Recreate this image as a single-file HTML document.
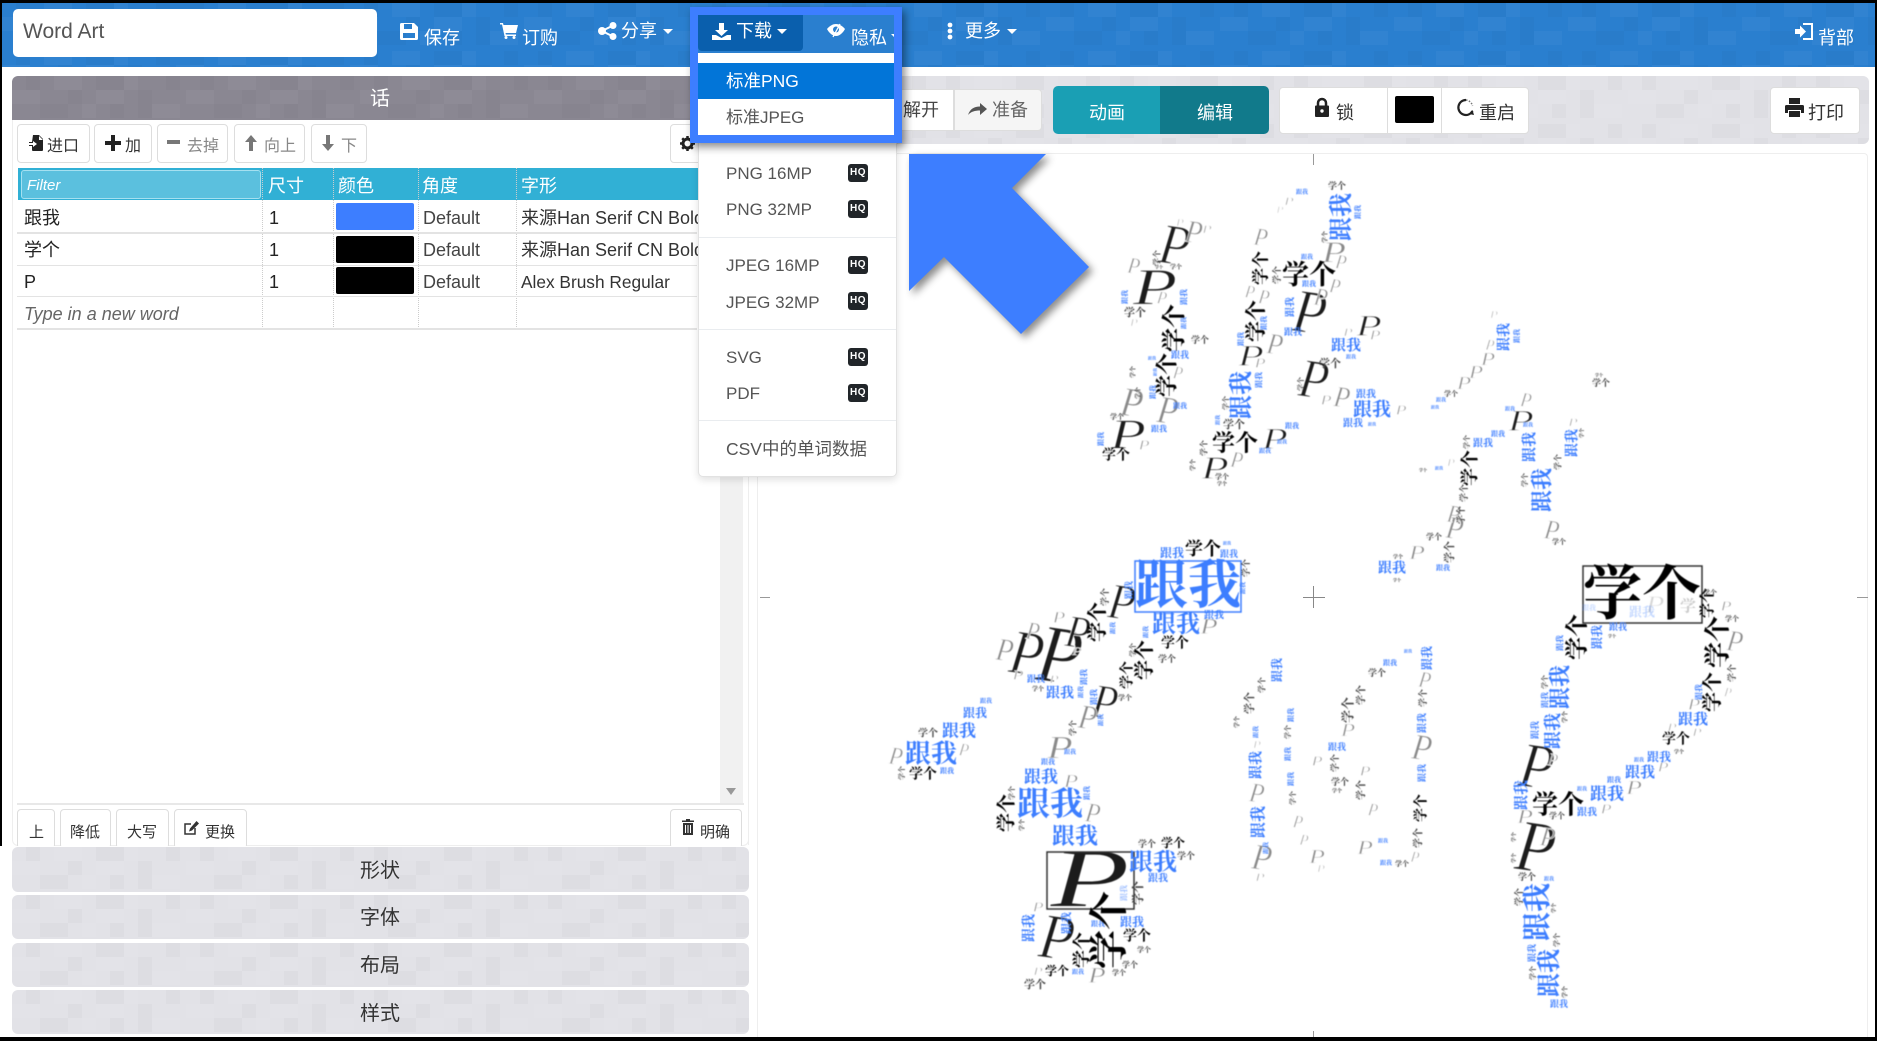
<!DOCTYPE html>
<html lang="zh-CN"><head><meta charset="utf-8"><title>Word Art</title>
<style>
html,body{margin:0;padding:0;background:#000;}
#page{position:relative;width:1877px;height:1041px;overflow:hidden;background:#000;font-family:"Liberation Sans","Noto Sans CJK SC",sans-serif;color:#333;}
#bg{position:absolute;left:2px;top:3px;width:1873px;height:1034px;background:#fff;}
.a{position:absolute;white-space:nowrap;}
.t{position:absolute;white-space:nowrap;font-size:18px;line-height:24px;height:24px;}
.w{color:#fff;}
.btn{position:absolute;background:#fff;border:1px solid #ddd;border-radius:4px;box-sizing:border-box;}
.tex{position:absolute;overflow:hidden;}
.tex svg{position:absolute;left:0;top:0;width:100%;height:100%;}
.tex rect{opacity:.55}
.acc{background:#e2e2e7;border-radius:6px;left:12px;width:737px;}
.sw{position:absolute;left:336px;width:78px;height:27px;border-radius:2px;}
.vd{position:absolute;width:0;border-left:1px dotted #ccc;}
.hl{position:absolute;left:17px;width:680px;height:1px;background:#e3e3e3;}
.hq{position:absolute;left:848px;width:20px;height:18px;border-radius:3px;background:#212529;color:#fff;font:bold 10px/18px "Liberation Sans",sans-serif;text-align:center;letter-spacing:.5px;}
.dd{position:absolute;left:726px;font-size:17px;line-height:24px;color:#555;white-space:nowrap;}
.caret{position:absolute;width:0;height:0;border-left:5px solid transparent;border-right:5px solid transparent;border-top:5px solid #fff;}
svg.i{position:absolute;overflow:visible;}
#cloud text{text-anchor:middle;dominant-baseline:central;}
#cloud{position:absolute;left:0;top:0;filter:blur(.5px);font-family:"Liberation Serif","Noto Serif CJK SC",serif;font-weight:700;}
.b{fill:#3d7eff}.k{fill:#000}.g{fill:#444}
.pd,.pl{font-family:"Liberation Serif",serif;font-style:italic;font-weight:400;}
.pd{fill:#1c1c1c;stroke:#fff;stroke-width:.05em}.pl{fill:#8a8a8a;stroke:#fff;stroke-width:.035em}
</style></head><body>
<div id="page">
<div id="bg"></div>
<svg width="0" height="0" style="position:absolute"><defs>
<pattern id="tx" width="174" height="48" patternUnits="userSpaceOnUse">
<g fill="#000" fill-opacity=".045"><rect x="14" y="0" width="14" height="14"/><rect x="56" y="14" width="14" height="14"/><rect x="84" y="0" width="28" height="14"/><rect x="126" y="14" width="14" height="28"/><rect x="28" y="28" width="28" height="14"/><rect x="154" y="0" width="14" height="14"/><rect x="98" y="28" width="14" height="14"/></g>
<g fill="#fff" fill-opacity=".06"><rect x="0" y="14" width="28" height="14"/><rect x="70" y="28" width="14" height="14"/><rect x="42" y="0" width="28" height="14"/><rect x="112" y="0" width="14" height="14"/><rect x="140" y="28" width="28" height="14"/><rect x="84" y="14" width="28" height="14"/></g>
</pattern></defs></svg>

<!-- navbar -->
<div class="tex" style="left:2px;top:3px;width:1873px;height:64px;background:#2a7fcf"><svg><rect width="100%" height="100%" fill="url(#tx)"/></svg></div>
<div class="a" style="left:13px;top:9px;width:364px;height:48px;background:#fff;border-radius:5px;font-size:21px;line-height:46px;color:#555;text-indent:10px">Word Art</div>

<svg class="i" style="left:400px;top:23px" width="18" height="17" viewBox="0 0 18 17"><path fill="#fff" fill-rule="evenodd" d="M1.500 0H14l4 4v11.500a1.500 1.500 0 0 1-1.500 1.500h-15A1.500 1.500 0 0 1 0 15.500v-14A1.500 1.500 0 0 1 1.500 0zM4 1v5h8V1zM3 10v5h12v-5z"/></svg>
<div class="t w" style="left:424px;top:26px">保存</div>
<svg class="i" style="left:500px;top:23px" width="18" height="16" viewBox="0 0 18 16"><path fill="#fff" d="M0 0h3l.5 2H18l-2 8H5.500l.4 1.500H16V13H4.500L2 1.500H0z"/><circle cx="6" cy="14.500" r="1.500" fill="#fff"/><circle cx="14" cy="14.500" r="1.500" fill="#fff"/></svg>
<div class="t w" style="left:522px;top:26px">订购</div>
<svg class="i" style="left:598px;top:22px" width="19" height="18" viewBox="0 0 19 18"><g fill="#fff"><circle cx="15" cy="3.500" r="3.500"/><circle cx="15" cy="14.500" r="3.500"/><circle cx="4" cy="9" r="4"/></g><path stroke="#fff" stroke-width="2" d="M15 3.500L4 9l11 5.500" fill="none"/></svg>
<div class="t w" style="left:621px;top:19px">分享</div>
<div class="caret" style="left:663px;top:29px"></div>
<svg class="i" style="left:947px;top:22px" width="6" height="18" viewBox="0 0 6 18"><g fill="#fff"><circle cx="3" cy="3" r="2.400"/><circle cx="3" cy="9" r="2.400"/><circle cx="3" cy="15" r="2.400"/></g></svg>
<div class="t w" style="left:965px;top:19px">更多</div>
<div class="caret" style="left:1007px;top:29px"></div>
<svg class="i" style="left:1795px;top:23px" width="18" height="17" viewBox="0 0 18 17"><path fill="#fff" d="M8 0h10v17H8v-2h8V2H8zM0 6h5V2.500L11 8.500l-6 6V11H0z"/></svg>
<div class="t w" style="left:1818px;top:26px">背部</div>

<!-- left panel -->
<div class="a" style="left:12px;top:120px;width:735px;height:725px;border:1px solid #eee;border-top:0;border-radius:0 0 6px 6px"></div>
<div class="tex" style="left:12px;top:76px;width:737px;height:44px;background:#8a8792;border-radius:6px 6px 0 0"><svg><rect width="100%" height="100%" fill="url(#tx)"/></svg></div>
<div class="t w" style="left:370px;top:87px;font-size:20px">话</div>

<div class="btn" style="left:17px;top:124px;width:73px;height:39px"></div>
<svg class="i" style="left:29px;top:135px" width="15" height="16" viewBox="0 0 15 16"><path fill="#222" d="M4 0h6l4 4v11a1 1 0 0 1-1 1H4a1 1 0 0 1-1-1v-4H0V7h3zm6 1v4h4z"/><path fill="#fff" d="M0 8h4V6l4 3-4 3v-2H0z"/></svg>
<div class="t" style="left:47px;top:135px;font-size:16px">进口</div>
<div class="btn" style="left:94px;top:124px;width:58px;height:39px"></div>
<svg class="i" style="left:105px;top:135px" width="16" height="16"><path fill="#222" d="M6 0h4v6h6v4h-6v6H6v-6H0V6h6z"/></svg>
<div class="t" style="left:125px;top:135px;font-size:16px">加</div>
<div class="btn" style="left:157px;top:124px;width:71px;height:39px"></div>
<svg class="i" style="left:167px;top:140px" width="13" height="4"><rect width="13" height="4" fill="#777"/></svg>
<div class="t" style="left:187px;top:135px;font-size:16px;color:#888">去掉</div>
<div class="btn" style="left:234px;top:124px;width:71px;height:39px"></div>
<svg class="i" style="left:245px;top:135px" width="12" height="16"><path fill="#777" d="M6 0l6 7H8v9H4V7H0z"/></svg>
<div class="t" style="left:264px;top:135px;font-size:16px;color:#888">向上</div>
<div class="btn" style="left:311px;top:124px;width:56px;height:39px"></div>
<svg class="i" style="left:322px;top:135px" width="12" height="16"><path fill="#777" d="M6 16l6-7H8V0H4v9H0z"/></svg>
<div class="t" style="left:341px;top:135px;font-size:16px;color:#888">下</div>
<div class="btn" style="left:670px;top:124px;width:60px;height:39px"></div>
<svg class="i" style="left:680px;top:136px" width="15" height="15" viewBox="0 0 15 15"><circle cx="7.500" cy="7.500" r="4.500" fill="none" stroke="#222" stroke-width="3"/><path stroke="#222" stroke-width="2.500" d="M7.500 0v3M7.500 12v3M0 7.500h3M12 7.500h3M2.200 2.200l2 2M10.800 10.800l2 2M2.200 12.800l2-2M10.800 4.200l2-2"/></svg>

<!-- table -->
<div class="a" style="left:720px;top:168px;width:23px;height:636px;background:#f1f1f1"></div>
<svg class="i" style="left:726px;top:788px" width="10" height="7"><path fill="#999" d="M0 0h10L5 7z"/></svg>
<div class="a" style="left:17px;top:803px;width:727px;height:2px;background:#e8e8e8"></div>
<div class="a" style="left:18px;top:168px;width:702px;height:32px;background:#31b0d5"></div>
<div class="a" style="left:21px;top:170px;width:238px;height:27px;background:#5bc0de;border:1px solid #a5e0f0;border-radius:3px;color:#fff;font-style:italic;font-size:15px;line-height:29px;text-indent:5px">Filter</div>
<div class="t w" style="left:268px;top:174px">尺寸</div>
<div class="t w" style="left:338px;top:174px">颜色</div>
<div class="t w" style="left:422px;top:174px">角度</div>
<div class="t w" style="left:521px;top:174px">字形</div>
<div class="vd" style="left:262px;top:168px;height:161px"></div>
<div class="vd" style="left:333px;top:168px;height:161px"></div>
<div class="vd" style="left:418px;top:168px;height:161px"></div>
<div class="vd" style="left:516px;top:168px;height:161px"></div>
<div class="hl" style="top:232px;height:2px"></div><div class="hl" style="top:265px"></div><div class="hl" style="top:296px"></div><div class="hl" style="top:328px;height:2px"></div>
<div class="t" style="left:24px;top:206px;color:#222">跟我</div><div class="t" style="left:269px;top:206px;color:#222">1</div><div class="sw" style="top:203px;background:#3d7eff"></div><div class="t" style="left:423px;top:206px;color:#444">Default</div><div class="t" style="left:521px;top:206px;color:#333">来源Han Serif CN Bold</div>
<div class="t" style="left:24px;top:238px;color:#222">学个</div><div class="t" style="left:269px;top:238px;color:#222">1</div><div class="sw" style="top:236px;background:#000"></div><div class="t" style="left:423px;top:238px;color:#444">Default</div><div class="t" style="left:521px;top:238px;color:#333">来源Han Serif CN Bold</div>
<div class="t" style="left:24px;top:270px;color:#222">P</div><div class="t" style="left:269px;top:270px;color:#222">1</div><div class="sw" style="top:267px;background:#000"></div><div class="t" style="left:423px;top:270px;color:#444">Default</div><div class="t" style="left:521px;top:270px;font-size:17.300px;color:#333">Alex Brush Regular</div>
<div class="t" style="left:24px;top:302px;font-style:italic;color:#666">Type in a new word</div>

<!-- bottom buttons -->
<div class="btn" style="left:17px;top:809px;width:38px;height:40px"></div><div class="t" style="left:29px;top:821px;font-size:15px">上</div>
<div class="btn" style="left:60px;top:809px;width:51px;height:40px"></div><div class="t" style="left:70px;top:821px;font-size:15px">降低</div>
<div class="btn" style="left:116px;top:809px;width:53px;height:40px"></div><div class="t" style="left:127px;top:821px;font-size:15px">大写</div>
<div class="btn" style="left:174px;top:809px;width:73px;height:40px"></div>
<svg class="i" style="left:184px;top:821px" width="15" height="14" viewBox="0 0 15 14"><path fill="none" stroke="#333" stroke-width="1.500" d="M11 7v6H1V3h6"/><path fill="#333" d="M12.500 0L15 2.500 8 9.500 5 10.500 6 7.500z"/></svg>
<div class="t" style="left:205px;top:821px;font-size:15px">更换</div>
<div class="btn" style="left:670px;top:809px;width:72px;height:40px"></div>
<svg class="i" style="left:682px;top:819px" width="12" height="16" viewBox="0 0 12 16"><path fill="#333" d="M4 0h4v1.500h4V3H0V1.500h4zM1 4h10v12H1zm2 2v8h1V6zm2.500 0v8h1V6zM8 6v8h1V6z"/></svg>
<div class="t" style="left:700px;top:821px;font-size:15px">明确</div>

<!-- accordions -->
<div class="a" style="left:0;top:846px;width:757px;height:191px;background:#fff"></div>
<div class="tex acc" style="top:847px;height:45px"><svg><rect width="100%" height="100%" fill="url(#tx)"/></svg></div><div class="t" style="left:360px;top:859px;font-size:20px">形状</div>
<div class="tex acc" style="top:895px;height:44px"><svg><rect width="100%" height="100%" fill="url(#tx)"/></svg></div><div class="t" style="left:360px;top:906px;font-size:20px">字体</div>
<div class="tex acc" style="top:943px;height:44px"><svg><rect width="100%" height="100%" fill="url(#tx)"/></svg></div><div class="t" style="left:360px;top:954px;font-size:20px">布局</div>
<div class="tex acc" style="top:990px;height:44px"><svg><rect width="100%" height="100%" fill="url(#tx)"/></svg></div><div class="t" style="left:360px;top:1002px;font-size:20px">样式</div>

<!-- right toolbar -->
<div class="a" style="left:748px;top:76px;width:1px;height:769px;background:#eee"></div>
<div class="tex" style="left:758px;top:76px;width:1111px;height:68px;background:#e2e2e7;border-radius:6px"><svg><rect width="100%" height="100%" fill="url(#tx)"/></svg></div>
<div class="a" style="left:880px;top:89px;width:74px;height:42px;background:#fff;border:1px solid #ddd;box-sizing:border-box"></div>
<div class="t" style="left:903px;top:98px;color:#444">解开</div>
<div class="a" style="left:954px;top:89px;width:88px;height:42px;background:#f5f5f5;border:1px solid #ddd;box-sizing:border-box;border-radius:0 4px 4px 0"></div>
<svg class="i" style="left:968px;top:103px" width="19" height="14" viewBox="0 0 19 14"><path fill="#555" d="M19 6l-7-6v3.500C6 3.500 2 6 0 12c3-3.500 7-4.500 12-4.500V12z"/></svg>
<div class="t" style="left:992px;top:98px;color:#666">准备</div>
<div class="a" style="left:1053px;top:86px;width:107px;height:48px;background:#1a9fb4;border-radius:5px 0 0 5px"></div>
<div class="a" style="left:1160px;top:86px;width:109px;height:48px;background:#117a8b;border-radius:0 5px 5px 0"></div>
<div class="t w" style="left:1089px;top:101px">动画</div>
<div class="t w" style="left:1197px;top:101px">编辑</div>
<div class="btn" style="left:1279px;top:87px;width:250px;height:47px"></div>
<div class="a" style="left:1387px;top:87px;width:1px;height:47px;background:#ddd"></div>
<div class="a" style="left:1441px;top:87px;width:1px;height:47px;background:#ddd"></div>
<svg class="i" style="left:1315px;top:98px" width="14" height="19" viewBox="0 0 14 19"><path fill="none" stroke="#222" stroke-width="2.500" d="M3 9V5a4 4 0 0 1 8 0v4"/><rect y="7.500" width="14" height="11.500" rx="1" fill="#222"/><circle cx="7" cy="13" r="1.700" fill="#fff"/></svg>
<div class="t" style="left:1336px;top:101px;color:#333">锁</div>
<div class="a" style="left:1395px;top:96px;width:39px;height:27px;background:#000;border-radius:2px"></div>
<svg class="i" style="left:1455px;top:98px" width="19" height="19" viewBox="0 0 19 19"><path fill="none" stroke="#222" stroke-width="2.200" d="M11 2a7.500 7.500 0 1 0 6.500 11"/><path fill="#222" d="M19 17l-5-1 3.500-4z"/><path fill="none" stroke="#777" stroke-width="1.500" stroke-dasharray="1.500 1.500" d="M11 2a7.500 7.500 0 0 1 6.500 6"/></svg>
<div class="t" style="left:1479px;top:101px;color:#333">重启</div>
<div class="btn" style="left:1770px;top:87px;width:90px;height:47px"></div>
<svg class="i" style="left:1785px;top:98px" width="19" height="19" viewBox="0 0 19 19"><path fill="#222" d="M4 0h11v6H4zM1.500 7h16A1.500 1.500 0 0 1 19 8.500V15h-3v-3H3v3H0V8.500A1.500 1.500 0 0 1 1.500 7zM4 13h11v6H4z"/></svg>
<div class="t" style="left:1808px;top:101px;color:#333">打印</div>

<!-- canvas panel -->
<div class="a" style="left:757px;top:153px;width:1111px;height:884px;border:1px solid #eee;border-bottom:0;box-sizing:border-box;border-radius:4px 4px 0 0"></div>
<div class="a" style="left:1313px;top:154px;width:1px;height:11px;background:#999"></div>
<div class="a" style="left:1313px;top:1031px;width:1px;height:6px;background:#999"></div>
<div class="a" style="left:760px;top:597px;width:10px;height:1px;background:#999"></div>
<div class="a" style="left:1857px;top:597px;width:11px;height:1px;background:#999"></div>
<div class="a" style="left:1303px;top:597px;width:22px;height:1px;background:#888"></div>
<div class="a" style="left:1313px;top:586px;width:1px;height:22px;background:#888"></div>

<!-- word cloud -->
<svg id="cloud" width="1877" height="1041" viewBox="0 0 1877 1041">
<g class="pd">
<text font-size="84" transform="translate(1090 878) scale(1.55 1)">P</text>
<text font-size="72" transform="translate(1060 655) rotate(8) scale(1 1.150)">P</text><text font-size="55" transform="translate(1027 653) rotate(8) scale(1 1.150)">P</text><text font-size="40" transform="translate(1078 633) rotate(8) scale(1 1.150)">P</text><text font-size="44" transform="translate(1122 603) rotate(8) scale(1 1.150)">P</text>
<text font-size="42" transform="translate(1105 702) rotate(8) scale(1 1.150)">P</text><text font-size="56" transform="translate(1057 938) rotate(8) scale(1 1.150)">P</text>
<text font-size="56" transform="translate(1537 767) rotate(8) scale(1 1.150)">P</text><text font-size="64" transform="translate(1536 847) rotate(8) scale(1 1.150)">P</text>
<text font-size="50" transform="translate(1175 245) rotate(8) scale(1 1.150)">P</text><text font-size="54" transform="translate(1310 312) rotate(8) scale(1 1.150)">P</text><text font-size="48" transform="translate(1314 380) rotate(8) scale(1 1.150)">P</text>
<text font-size="52" transform="translate(1155 287) scale(1.400 1)">P</text><text font-size="42" transform="translate(1128 435) scale(1.400 1)">P</text><text font-size="32" transform="translate(1215 468) scale(1.400 1)">P</text><text font-size="30" transform="translate(1275 438) scale(1.400 1)">P</text><text font-size="30" transform="translate(1251 355) scale(1.400 1)">P</text><text font-size="30" transform="translate(1369 325) scale(1.400 1)">P</text><text font-size="30" transform="translate(1521 420) scale(1.400 1)">P</text>
</g>
<g class="pl">
<text font-size="22" transform="translate(1209 626) scale(1.300 1)">P</text><text font-size="30" transform="translate(1088 717) rotate(8) scale(1 1.150)">P</text><text font-size="32" transform="translate(1060 748) scale(1.300 1)">P</text><text font-size="18" transform="translate(1071 781) scale(1.300 1)">P</text><text font-size="24" transform="translate(1093 813) rotate(8) scale(1 1.150)">P</text>
<text font-size="12" transform="translate(1038 972) scale(1.300 1)">P</text><text font-size="14" transform="translate(1038 907) scale(1.300 1)">P</text><text font-size="22" transform="translate(1097 975) scale(1.300 1)">P</text>
<text font-size="22" transform="translate(1033 632) rotate(8) scale(1 1.150)">P</text><text font-size="28" transform="translate(1005 650) rotate(8) scale(1 1.150)">P</text><text font-size="16" transform="translate(1059 618) scale(1.300 1)">P</text><text font-size="14" transform="translate(1018 675) scale(1.300 1)">P</text><text font-size="12" transform="translate(1054 680) scale(1.300 1)">P</text><text font-size="12" transform="translate(1077 652) scale(1.300 1)">P</text>
<text font-size="22" transform="translate(896 757) rotate(8) scale(1 1.150)">P</text><text font-size="16" transform="translate(964 750) rotate(8) scale(1 1.150)">P</text>
<text font-size="24" transform="translate(1257 793) rotate(8) scale(1 1.150)">P</text><text font-size="32" transform="translate(1262 858) rotate(8) scale(1 1.150)">P</text><text font-size="12" transform="translate(1260 878) scale(1.300 1)">P</text><text font-size="10" transform="translate(1257 745) scale(1.300 1)">P</text>
<text font-size="16" transform="translate(1298 822) rotate(8) scale(1 1.150)">P</text><text font-size="14" transform="translate(1304 841) rotate(8) scale(1 1.150)">P</text><text font-size="20" transform="translate(1317 857) scale(1.300 1)">P</text><text font-size="10" transform="translate(1321 869) scale(1.300 1)">P</text><text font-size="14" transform="translate(1317 761) scale(1.300 1)">P</text><text font-size="18" transform="translate(1348 730) scale(1.300 1)">P</text>
<text font-size="20" transform="translate(1425 680) rotate(8) scale(1 1.150)">P</text><text font-size="32" transform="translate(1422 748) rotate(8) scale(1 1.150)">P</text><text font-size="20" transform="translate(1365 848) scale(1.300 1)">P</text><text font-size="14" transform="translate(1415 858) rotate(8) scale(1 1.150)">P</text><text font-size="14" transform="translate(1365 771) scale(1.300 1)">P</text><text font-size="16" transform="translate(1373 810) rotate(8) scale(1 1.150)">P</text>
<text font-size="28" transform="translate(1455 528) rotate(8) scale(1 1.150)">P</text><text font-size="20" transform="translate(1417 553) scale(1.300 1)">P</text><text font-size="24" transform="translate(1552 530) rotate(8) scale(1 1.150)">P</text>
<text font-size="24" transform="translate(1655 605) scale(1.300 1)" opacity=".35">P</text><text font-size="14" transform="translate(1726 606) scale(1.300 1)">P</text><text font-size="26" transform="translate(1735 642) rotate(8) scale(1 1.150)">P</text><text font-size="16" transform="translate(1694 705) scale(1.300 1)">P</text><text font-size="12" transform="translate(1728 692) rotate(8) scale(1 1.150)">P</text>
<text font-size="12" transform="translate(1672 728) scale(1.300 1)">P</text><text font-size="12" transform="translate(1697 733) scale(1.300 1)">P</text><text font-size="14" transform="translate(1663 767) scale(1.300 1)">P</text><text font-size="20" transform="translate(1634 788) scale(1.300 1)">P</text><text font-size="14" transform="translate(1606 809) scale(1.300 1)">P</text>
<text font-size="20" transform="translate(1525 817) scale(1.300 1)">P</text><text font-size="24" transform="translate(1548 837) rotate(8) scale(1 1.150)">P</text><text font-size="16" transform="translate(1553 760) rotate(8) scale(1 1.150)">P</text>
<text font-size="12" transform="translate(1289 202) scale(1.300 1)">P</text><text font-size="9" transform="translate(1280 211) scale(1.300 1)">P</text><text font-size="22" transform="translate(1261 238) rotate(8) scale(1 1.150)">P</text><text font-size="30" transform="translate(1334 252) scale(1.300 1)">P</text><text font-size="18" transform="translate(1341 263) rotate(8) scale(1 1.150)">P</text><text font-size="18" transform="translate(1335 287) rotate(8) scale(1 1.150)">P</text><text font-size="22" transform="translate(1321 298) rotate(8) scale(1 1.150)">P</text>
<text font-size="14" transform="translate(1375 335) scale(1.300 1)">P</text><text font-size="12" transform="translate(1348 333) scale(1.300 1)">P</text><text font-size="14" transform="translate(1326 400) scale(1.300 1)">P</text><text font-size="26" transform="translate(1342 398) rotate(8) scale(1 1.150)">P</text><text font-size="14" transform="translate(1401 410) scale(1.300 1)">P</text>
<text font-size="18" transform="translate(1264 298) rotate(8) scale(1 1.150)">P</text><text font-size="16" transform="translate(1250 292) rotate(8) scale(1 1.150)">P</text><text font-size="26" transform="translate(1275 345) rotate(8) scale(1 1.150)">P</text><text font-size="14" transform="translate(1260 363) scale(1.300 1)">P</text><text font-size="20" transform="translate(1237 460) rotate(8) scale(1 1.150)">P</text>
<text font-size="28" transform="translate(1194 232) rotate(8) scale(1 1.150)">P</text><text font-size="12" transform="translate(1207 230) scale(1.300 1)">P</text><text font-size="10" transform="translate(1180 223) scale(1.300 1)">P</text><text font-size="20" transform="translate(1134 266) rotate(8) scale(1 1.150)">P</text><text font-size="16" transform="translate(1162 298) rotate(8) scale(1 1.150)">P</text><text font-size="10" transform="translate(1134 323) scale(1.300 1)">P</text>
<text font-size="16" transform="translate(1178 373) rotate(8) scale(1 1.150)">P</text><text font-size="36" transform="translate(1132 403) rotate(8) scale(1 1.150)">P</text><text font-size="34" transform="translate(1168 410) rotate(8) scale(1 1.150)">P</text><text font-size="14" transform="translate(1144 445) scale(1.300 1)">P</text>
<text font-size="10" transform="translate(1494 315) scale(1.300 1)">P</text><text font-size="14" transform="translate(1490 346) rotate(8) scale(1 1.150)">P</text><text font-size="18" transform="translate(1488 359) scale(1.300 1)">P</text><text font-size="18" transform="translate(1476 372) scale(1.300 1)">P</text><text font-size="18" transform="translate(1464 383) scale(1.300 1)">P</text><text font-size="18" transform="translate(1526 401) rotate(8) scale(1 1.150)">P</text><text font-size="12" transform="translate(1573 423) scale(1.300 1)">P</text><text font-size="10" transform="translate(1451 463) scale(1.300 1)">P</text><text font-size="22" transform="translate(1454 515) rotate(8) scale(1 1.150)">P</text>
</g>
<rect x="1135" y="561" width="106" height="51" fill="none" stroke="#3d7eff" stroke-width="1.500"/>
<rect x="1047" y="852" width="87" height="57" fill="none" stroke="#333" stroke-width="1.500"/>
<rect x="1583" y="566" width="119" height="57" fill="none" stroke="#333" stroke-width="1.500"/>
<g class="b">
<text x="1188" y="586" font-size="53">跟我</text><text x="1172" y="553" font-size="12">跟我</text><text x="1229" y="554" font-size="9">跟我</text><text x="1227" y="543" font-size="4">跟我</text>
<text x="1244" y="588" font-size="6" transform="rotate(-90 1244 588)">跟我</text><text x="1176" y="625" font-size="24">跟我</text><text x="1214" y="616" font-size="10">跟我</text><text x="1147" y="632" font-size="6" transform="rotate(-90 1147 632)">跟我</text>
<text x="1094" y="697" font-size="8" transform="rotate(-90 1094 697)">跟我</text><text x="1102" y="720" font-size="6" transform="rotate(-90 1102 720)">跟我</text><text x="1070" y="753" font-size="6">跟我</text><text x="1048" y="762" font-size="7">跟我</text>
<text x="1041" y="777" font-size="17">跟我</text><text x="1050" y="805" font-size="33">跟我</text><text x="1087" y="793" font-size="7" transform="rotate(-90 1087 793)">跟我</text><text x="1075" y="836" font-size="23">跟我</text>
<text x="1153" y="863" font-size="24">跟我</text><text x="1158" y="879" font-size="10">跟我</text><text x="1124" y="893" font-size="8" opacity=".5" transform="rotate(-90 1124 893)">跟我</text><text x="1132" y="922" font-size="12">跟我</text>
<text x="1098" y="924" font-size="7">跟我</text><text x="1030" y="928" font-size="14" transform="rotate(-90 1030 928)">跟我</text><text x="1067" y="923" font-size="11" transform="rotate(-90 1067 923)">跟我</text><text x="1078" y="973" font-size="6">跟我</text>
<text x="1129" y="590" font-size="9" transform="rotate(-90 1129 590)">跟我</text><text x="1114" y="628" font-size="6" transform="rotate(-90 1114 628)">跟我</text><text x="1036" y="679" font-size="9">跟我</text><text x="1060" y="694" font-size="14">跟我</text>
<text x="1084" y="677" font-size="8" transform="rotate(-90 1084 677)">跟我</text><text x="1082" y="692" font-size="6" transform="rotate(-90 1082 692)">跟我</text>
<text x="931" y="754" font-size="26">跟我</text><text x="959" y="731" font-size="17">跟我</text><text x="975" y="713" font-size="12">跟我</text><text x="986" y="702" font-size="6">跟我</text><text x="947" y="771" font-size="7">跟我</text>
<text x="1277" y="670" font-size="12" transform="rotate(-90 1277 670)">跟我</text><text x="1257" y="732" font-size="6" transform="rotate(-90 1257 732)">跟我</text><text x="1257" y="765" font-size="14" transform="rotate(-90 1257 765)">跟我</text><text x="1259" y="822" font-size="16" transform="rotate(-90 1259 822)">跟我</text>
<text x="1267" y="848" font-size="6" transform="rotate(-90 1267 848)">跟我</text><text x="1291" y="715" font-size="7" transform="rotate(-90 1291 715)">跟我</text><text x="1288" y="754" font-size="7" transform="rotate(-90 1288 754)">跟我</text><text x="1291" y="779" font-size="7" transform="rotate(-90 1291 779)">跟我</text><text x="1337" y="747" font-size="9">跟我</text>
<text x="1427" y="658" font-size="12" transform="rotate(-90 1427 658)">跟我</text><text x="1390" y="663" font-size="7">跟我</text><text x="1408" y="651" font-size="4">跟我</text><text x="1423" y="723" font-size="10" transform="rotate(-90 1423 723)">跟我</text><text x="1422" y="773" font-size="9" transform="rotate(-90 1422 773)">跟我</text>
<text x="1383" y="842" font-size="5">跟我</text><text x="1386" y="864" font-size="6">跟我</text><text x="1392" y="569" font-size="14">跟我</text><text x="1443" y="568" font-size="7">跟我</text>
<text x="1597" y="637" font-size="12" transform="rotate(-90 1597 637)">跟我</text><text x="1618" y="627" font-size="9">跟我</text><text x="1560" y="643" font-size="8" transform="rotate(-90 1560 643)">跟我</text><text x="1560" y="687" font-size="22" transform="rotate(-90 1560 687)">跟我</text>
<text x="1553" y="731" font-size="18" transform="rotate(-90 1553 731)">跟我</text><text x="1545" y="700" font-size="8" transform="rotate(-90 1545 700)">跟我</text><text x="1535" y="730" font-size="9" transform="rotate(-90 1535 730)">跟我</text><text x="1522" y="795" font-size="15" transform="rotate(-90 1522 795)">跟我</text>
<text x="1607" y="794" font-size="17">跟我</text><text x="1587" y="813" font-size="10">跟我</text><text x="1582" y="790" font-size="5">跟我</text><text x="1538" y="912" font-size="29" transform="rotate(-90 1538 912)">跟我</text><text x="1550" y="973" font-size="24" transform="rotate(-90 1550 973)">跟我</text>
<text x="1549" y="880" font-size="5">跟我</text><text x="1532" y="953" font-size="9" transform="rotate(-90 1532 953)">跟我</text><text x="1559" y="1004" font-size="9">跟我</text>
<text x="1699" y="692" font-size="8" transform="rotate(-90 1699 692)">跟我</text><text x="1693" y="720" font-size="15">跟我</text><text x="1659" y="757" font-size="12">跟我</text><text x="1640" y="773" font-size="15">跟我</text><text x="1639" y="761" font-size="5">跟我</text><text x="1614" y="780" font-size="7">跟我</text>
<text x="1342" y="217" font-size="24" transform="rotate(-90 1342 217)">跟我</text><text x="1358" y="212" font-size="7" transform="rotate(-90 1358 212)">跟我</text><text x="1302" y="193" font-size="6">跟我</text><text x="1307" y="258" font-size="6">跟我</text><text x="1309" y="284" font-size="7">跟我</text>
<text x="1291" y="307" font-size="10" transform="rotate(-90 1291 307)">跟我</text><text x="1293" y="332" font-size="9">跟我</text><text x="1346" y="346" font-size="15">跟我</text><text x="1351" y="358" font-size="5">跟我</text><text x="1366" y="395" font-size="10">跟我</text><text x="1372" y="410" font-size="19">跟我</text><text x="1353" y="424" font-size="10">跟我</text><text x="1372" y="424" font-size="4">跟我</text>
<text x="1264" y="323" font-size="7" transform="rotate(-90 1264 323)">跟我</text><text x="1241" y="339" font-size="7" transform="rotate(-90 1241 339)">跟我</text><text x="1242" y="395" font-size="24" transform="rotate(-90 1242 395)">跟我</text><text x="1259" y="380" font-size="8" transform="rotate(-90 1259 380)">跟我</text><text x="1219" y="420" font-size="5" transform="rotate(-90 1219 420)">跟我</text>
<text x="1292" y="426" font-size="7">跟我</text><text x="1282" y="443" font-size="5">跟我</text><text x="1265" y="452" font-size="6">跟我</text>
<text x="1125" y="297" font-size="7" transform="rotate(-90 1125 297)">跟我</text><text x="1184" y="297" font-size="8" transform="rotate(-90 1184 297)">跟我</text><text x="1185" y="323" font-size="6" transform="rotate(-90 1185 323)">跟我</text><text x="1180" y="355" font-size="9">跟我</text><text x="1152" y="358" font-size="4">跟我</text>
<text x="1155" y="372" font-size="4" transform="rotate(-90 1155 372)">跟我</text><text x="1153" y="392" font-size="7" transform="rotate(-90 1153 392)">跟我</text><text x="1180" y="406" font-size="7">跟我</text><text x="1159" y="429" font-size="8">跟我</text><text x="1101" y="439" font-size="7" transform="rotate(-90 1101 439)">跟我</text>
<text x="1505" y="337" font-size="14" transform="rotate(-90 1505 337)">跟我</text><text x="1517" y="336" font-size="7" transform="rotate(-90 1517 336)">跟我</text><text x="1441" y="401" font-size="5">跟我</text><text x="1435" y="407" font-size="4">跟我</text><text x="1510" y="410" font-size="5">跟我</text><text x="1528" y="426" font-size="5">跟我</text>
<text x="1498" y="434" font-size="7">跟我</text><text x="1483" y="444" font-size="10">跟我</text><text x="1530" y="447" font-size="15" transform="rotate(-90 1530 447)">跟我</text><text x="1573" y="443" font-size="14" transform="rotate(-90 1573 443)">跟我</text><text x="1542" y="490" font-size="22" transform="rotate(-90 1542 490)">跟我</text><text x="1439" y="468" font-size="4">跟我</text>
</g>
<g class="k">
<text x="1203" y="549" font-size="18">学个</text><text x="1145" y="660" font-size="20" transform="rotate(-90 1145 660)">学个</text><text x="1128" y="675" font-size="14" transform="rotate(-90 1128 675)">学个</text><text x="1175" y="644" font-size="14">学个</text>
<text x="1007" y="813" font-size="19" transform="rotate(-90 1007 813)">学个</text><text x="1173" y="843" font-size="12">学个</text><text x="1110" y="930" font-size="39" transform="rotate(-90 1110 930)">学个</text><text x="1137" y="937" font-size="14">学个</text>
<text x="1082" y="950" font-size="18" transform="rotate(-90 1082 950)">学个</text><text x="1057" y="971" font-size="12">学个</text><text x="1098" y="622" font-size="20" transform="rotate(-90 1098 622)">学个</text><text x="923" y="775" font-size="14">学个</text>
<text x="1642" y="594" font-size="59">学个</text><text x="1577" y="637" font-size="23" transform="rotate(-90 1577 637)">学个</text><text x="1558" y="805" font-size="26">学个</text><text x="1708" y="603" font-size="15" transform="rotate(-90 1708 603)">学个</text><text x="1718" y="642" font-size="26" transform="rotate(-90 1718 642)">学个</text><text x="1713" y="692" font-size="20" transform="rotate(-90 1713 692)">学个</text><text x="1676" y="740" font-size="14">学个</text>
<text x="1309" y="275" font-size="27">学个</text><text x="1261" y="268" font-size="17" transform="rotate(-90 1261 268)">学个</text><text x="1256" y="321" font-size="21" transform="rotate(-90 1256 321)">学个</text><text x="1235" y="443" font-size="23">学个</text><text x="1175" y="328" font-size="24" transform="rotate(-90 1175 328)">学个</text><text x="1167" y="375" font-size="22" transform="rotate(-90 1167 375)">学个</text><text x="1116" y="456" font-size="14">学个</text><text x="1470" y="468" font-size="18" transform="rotate(-90 1470 468)">学个</text><text x="1422" y="808" font-size="14" transform="rotate(-90 1422 808)">学个</text>
</g>
<g class="g">
<text x="1246" y="568" font-size="9" transform="rotate(-90 1246 568)">学个</text><text x="1167" y="659" font-size="9">学个</text><text x="1133" y="650" font-size="7" transform="rotate(-90 1133 650)">学个</text><text x="1125" y="698" font-size="7">学个</text>
<text x="1073" y="728" font-size="8" transform="rotate(-90 1073 728)">学个</text><text x="1012" y="793" font-size="7" transform="rotate(-90 1012 793)">学个</text><text x="1023" y="825" font-size="6" transform="rotate(-90 1023 825)">学个</text><text x="1147" y="844" font-size="9">学个</text><text x="1186" y="856" font-size="9">学个</text>
<text x="1138" y="893" font-size="12" transform="rotate(-90 1138 893)">学个</text><text x="1144" y="950" font-size="7">学个</text><text x="1130" y="965" font-size="8">学个</text><text x="1119" y="973" font-size="7">学个</text><text x="1035" y="985" font-size="11">学个</text>
<text x="1105" y="597" font-size="9" transform="rotate(-90 1105 597)">学个</text><text x="1038" y="690" font-size="6">学个</text><text x="928" y="734" font-size="10">学个</text><text x="902" y="773" font-size="7" transform="rotate(-90 902 773)">学个</text>
<text x="1262" y="685" font-size="8" transform="rotate(-90 1262 685)">学个</text><text x="1250" y="703" font-size="11" transform="rotate(-90 1250 703)">学个</text><text x="1238" y="722" font-size="6" transform="rotate(-90 1238 722)">学个</text><text x="1288" y="732" font-size="7" transform="rotate(-90 1288 732)">学个</text><text x="1293" y="798" font-size="7" transform="rotate(-90 1293 798)">学个</text>
<text x="1335" y="763" font-size="9" transform="rotate(-90 1335 763)">学个</text><text x="1340" y="782" font-size="9">学个</text><text x="1337" y="792" font-size="5">学个</text><text x="1348" y="710" font-size="13" transform="rotate(-90 1348 710)">学个</text><text x="1377" y="673" font-size="9">学个</text><text x="1362" y="695" font-size="10" transform="rotate(-90 1362 695)">学个</text>
<text x="1423" y="698" font-size="9" transform="rotate(-90 1423 698)">学个</text><text x="1419" y="838" font-size="10" transform="rotate(-90 1419 838)">学个</text><text x="1402" y="864" font-size="7">学个</text><text x="1362" y="790" font-size="10" transform="rotate(-90 1362 790)">学个</text>
<text x="1434" y="537" font-size="8">学个</text><text x="1450" y="552" font-size="11" transform="rotate(-90 1450 552)">学个</text><text x="1397" y="580" font-size="4">学个</text><text x="1398" y="558" font-size="5">学个</text><text x="1559" y="542" font-size="7">学个</text>
<text x="1612" y="636" font-size="4">学个</text><text x="1545" y="682" font-size="7" transform="rotate(-90 1545 682)">学个</text><text x="1566" y="717" font-size="6" transform="rotate(-90 1566 717)">学个</text><text x="1557" y="816" font-size="8">学个</text><text x="1515" y="837" font-size="5" transform="rotate(-90 1515 837)">学个</text><text x="1515" y="858" font-size="5" transform="rotate(-90 1515 858)">学个</text>
<text x="1527" y="877" font-size="9">学个</text><text x="1519" y="897" font-size="9" transform="rotate(-90 1519 897)">学个</text><text x="1555" y="908" font-size="5" transform="rotate(-90 1555 908)">学个</text><text x="1557" y="940" font-size="7" transform="rotate(-90 1557 940)">学个</text><text x="1533" y="973" font-size="7" transform="rotate(-90 1533 973)">学个</text><text x="1566" y="992" font-size="6" transform="rotate(-90 1566 992)">学个</text>
<text x="1710" y="593" font-size="7">学个</text><text x="1732" y="619" font-size="7">学个</text><text x="1732" y="673" font-size="9" transform="rotate(-90 1732 673)">学个</text><text x="1679" y="753" font-size="5">学个</text>
<text x="1337" y="186" font-size="9">学个</text><text x="1326" y="237" font-size="6" transform="rotate(-90 1326 237)">学个</text><text x="1277" y="275" font-size="9" transform="rotate(-90 1277 275)">学个</text><text x="1330" y="364" font-size="11">学个</text><text x="1301" y="384" font-size="7" transform="rotate(-90 1301 384)">学个</text>
<text x="1226" y="403" font-size="7" transform="rotate(-90 1226 403)">学个</text><text x="1234" y="425" font-size="11">学个</text><text x="1204" y="448" font-size="8" transform="rotate(-90 1204 448)">学个</text><text x="1194" y="465" font-size="6" transform="rotate(-90 1194 465)">学个</text><text x="1222" y="477" font-size="7">学个</text><text x="1222" y="485" font-size="5">学个</text>
<text x="1157" y="258" font-size="8" transform="rotate(-90 1157 258)">学个</text><text x="1176" y="268" font-size="6">学个</text><text x="1159" y="267" font-size="4">学个</text><text x="1135" y="313" font-size="11">学个</text><text x="1200" y="340" font-size="9">学个</text><text x="1134" y="372" font-size="6" transform="rotate(-90 1134 372)">学个</text><text x="1139" y="393" font-size="6" transform="rotate(-90 1139 393)">学个</text><text x="1117" y="417" font-size="7">学个</text>
<text x="1451" y="394" font-size="7">学个</text><text x="1601" y="383" font-size="9">学个</text><text x="1599" y="375" font-size="4">学个</text><text x="1467" y="442" font-size="7" transform="rotate(-90 1467 442)">学个</text><text x="1558" y="462" font-size="8" transform="rotate(-90 1558 462)">学个</text><text x="1583" y="433" font-size="5" transform="rotate(-90 1583 433)">学个</text>
<text x="1525" y="480" font-size="7" transform="rotate(-90 1525 480)">学个</text><text x="1423" y="470" font-size="4">学个</text><text x="1464" y="493" font-size="9" transform="rotate(-90 1464 493)">学个</text><text x="1461" y="515" font-size="9" transform="rotate(-90 1461 515)">学个</text>
</g>
<text class="b" x="1642" y="612" font-size="13" opacity=".3">跟我</text>
<text class="b" x="1589" y="608" font-size="7" opacity=".3">跟我</text>
<text x="1688" y="607" font-size="16" fill="#ccc">学</text>
</svg>

<!-- arrow -->
<svg class="i" style="left:0;top:0;filter:drop-shadow(4px 4px 4px rgba(0,0,0,.45))" width="1877" height="1041"><polygon fill="#3d7eff" points="909,154 1046,154 1012,188 1089,267 1021,334 944,257 909,291"/></svg>

<!-- dropdown lower -->
<div class="a" style="left:698px;top:130px;width:199px;height:347px;background:#fff;border:1px solid #e2e2e2;border-radius:0 0 5px 5px;box-sizing:border-box;box-shadow:0 3px 8px rgba(0,0,0,.12)"></div>
<div class="dd" style="top:162px">PNG 16MP</div><div class="hq" style="top:164px">HQ</div>
<div class="dd" style="top:198px">PNG 32MP</div><div class="hq" style="top:200px">HQ</div>
<div class="a" style="left:699px;top:237px;width:197px;height:1px;background:#e9ecef"></div>
<div class="dd" style="top:254px">JPEG 16MP</div><div class="hq" style="top:256px">HQ</div>
<div class="dd" style="top:291px">JPEG 32MP</div><div class="hq" style="top:292px">HQ</div>
<div class="a" style="left:699px;top:329px;width:197px;height:1px;background:#e9ecef"></div>
<div class="dd" style="top:346px">SVG</div><div class="hq" style="top:348px">HQ</div>
<div class="dd" style="top:382px">PDF</div><div class="hq" style="top:384px">HQ</div>
<div class="a" style="left:699px;top:420px;width:197px;height:1px;background:#e9ecef"></div>
<div class="dd" style="top:437px;font-size:17.500px">CSV中的单词数据</div>

<!-- highlight frame -->
<div class="a" style="left:690px;top:7px;width:212px;height:136px;box-sizing:border-box;border:8px solid #3d7eff;box-shadow:3px 4px 8px rgba(0,0,0,.45);overflow:hidden;background:#2a7fcf">
<div class="a" style="left:0;top:0;width:105px;height:36px;background:#0a5fad;border-radius:0 0 4px 4px"></div>
<div class="a" style="left:0;top:38px;width:196px;height:82px;background:#fff"></div>
<div class="a" style="left:0;top:48px;width:196px;height:36px;background:#0275d8"></div>
<div class="t w" style="left:28px;top:54px;font-size:17.500px">标准PNG</div>
<div class="t" style="left:28px;top:91px;font-size:17px;color:#555">标准JPEG</div>
<svg class="i" style="left:14px;top:8px" width="19" height="17" viewBox="0 0 19 17"><path fill="#fff" d="M7 0h5v7h4l-6.500 6L3 7h4zM0 12h4l5.500 3L15 12h4v5H0z"/></svg>
<div class="t w" style="left:38px;top:4px">下载</div>
<div class="caret" style="left:79px;top:14px"></div>
<svg class="i" style="left:129px;top:9px" width="18" height="13" viewBox="0 0 18 13"><path fill="#fff" d="M0 5c3-3.500 6-5 9-5s6 1.500 9 5c-1.500 3-5 7-9 7S1.500 8 0 5z"/><circle cx="9" cy="5.500" r="3" fill="#2a7fcf"/><path stroke="#fff" stroke-width="1.300" d="M13 0L6 13"/></svg>
<div class="t w" style="left:153px;top:11px">隐私</div>
<div class="caret" style="left:193px;top:19px"></div>
</div>

</div>
</body></html>
